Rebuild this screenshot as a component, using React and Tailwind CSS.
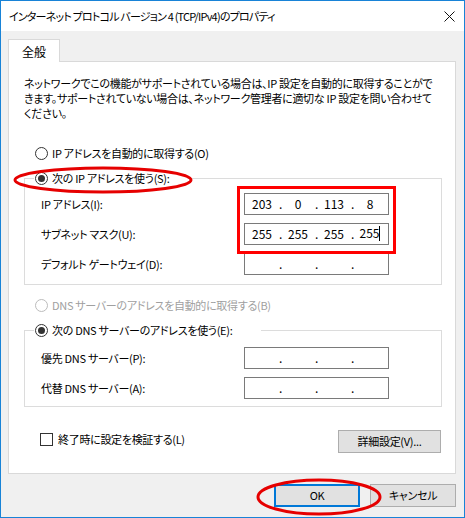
export default function App() {
  const font = "font-['Noto_Sans_CJK_JP',sans-serif] [font-feature-settings:'palt']";

  const Radio = ({ checked, disabled }) => (
    <span
      className={`w-[13px] h-[13px] rounded-full border bg-white flex items-center justify-center shrink-0 ${
        disabled ? "border-[#bcbcbc]" : "border-[#333]"
      }`}
    >
      {checked && <span className="w-[7px] h-[7px] rounded-full bg-[#333]" />}
    </span>
  );

  const IpField = ({ octets = ["", "", "", ""], cursor }) => (
    <div className="w-[145px] h-[22px] border border-[#7a7a7a] bg-white flex items-center text-[12px] leading-none tracking-normal">
      {octets.map((o, i) => (
        <div key={i} className="flex items-center">
          <span className="w-[34px] text-center">
            {o}
            {cursor && i === 3 && (
              <span className="inline-block w-px h-[15px] bg-black align-middle -mt-[2px]" />
            )}
          </span>
          {i < 3 && <span className="w-[2px] text-center">.</span>}
        </div>
      ))}
    </div>
  );

  const FieldRow = ({ label, children }) => (
    <div className="flex items-center h-[22px]">
      <span className="pl-[16px] w-[219px]">{label}</span>
      {children}
    </div>
  );

  return (
    <div className={`relative w-[465px] h-[518px] border border-[#1883d7] bg-[#f0f0f0] flex flex-col text-[11px] tracking-[-0.3px] text-black ${font}`}>
      {/* title bar */}
      <div className="h-[30px] bg-white flex items-center justify-between pl-[8px] pr-[9px] shrink-0">
        <span className="leading-none text-[11px] tracking-[-0.8px]">インターネット プロトコル バージョン 4 (TCP/IPv4)のプロパティ</span>
        <svg width="11" height="11" viewBox="0 0 11 11" className="mt-px">
          <path d="M0.5 0.5 L10.5 10.5 M10.5 0.5 L0.5 10.5" stroke="#111" strokeWidth="1" />
        </svg>
      </div>

      {/* body */}
      <div className="flex-1 pl-[7px] pr-[8px] pt-[8px] flex flex-col">
        <div className="relative z-10 w-[52px] h-[23px] -mb-px bg-white border border-b-0 border-[#d9d9d9] flex items-center justify-center">
          <span className="leading-none pt-[1px] text-[12px] tracking-normal">全般</span>
        </div>
        <div className="w-[448px] h-[413px] bg-white border border-[#d9d9d9] pl-[15px] pr-[13px] pt-[14px] flex flex-col">
          <p className="leading-[15px] whitespace-nowrap">
            ネットワークでこの機能がサポートされている場合は、IP 設定を自動的に取得することがで
            <br />
            きます。サポートされていない場合は、ネットワーク管理者に適切な IP 設定を問い合わせて
            <br />
            ください。
          </p>

          <div className="mt-[24px] h-[16px] flex items-center gap-[4px] pl-[11px]">
            <Radio />
            <span>IP アドレスを自動的に取得する(O)</span>
          </div>

          {/* group 1 */}
          <div className="mt-[9px] h-[16px] flex">
            <span className="w-[10px] h-[8px] self-end border-l border-t border-[#dcdcdc]" />
            <span className="w-[156px] flex items-center gap-[4px] pl-[1px]">
              <Radio checked />
              <span className="whitespace-nowrap">次の IP アドレスを使う(S):</span>
            </span>
            <span className="flex-1 h-[8px] self-end border-t border-r border-[#dcdcdc]" />
          </div>
          <div className="border-l border-r border-b border-[#dcdcdc] pt-[7px] pb-[9px] flex flex-col gap-[8px]">
            <FieldRow label="IP アドレス(I):">
              <IpField octets={["203", "0", "113", "8"]} />
            </FieldRow>
            <FieldRow label="サブネット マスク(U):">
              <IpField octets={["255", "255", "255", "255"]} cursor />
            </FieldRow>
            <FieldRow label="デフォルト ゲートウェイ(D):">
              <IpField />
            </FieldRow>
          </div>

          <div className="mt-[12px] h-[16px] flex items-center gap-[4px] pl-[11px] text-[#a0a0a0]">
            <Radio disabled />
            <span>DNS サーバーのアドレスを自動的に取得する(B)</span>
          </div>

          {/* group 2 */}
          <div className="mt-[9px] h-[16px] flex">
            <span className="w-[10px] h-[8px] self-end border-l border-t border-[#dcdcdc]" />
            <span className="w-[227px] flex items-center gap-[4px] pl-[1px]">
              <Radio checked />
              <span className="whitespace-nowrap">次の DNS サーバーのアドレスを使う(E):</span>
            </span>
            <span className="flex-1 h-[8px] self-end border-t border-r border-[#dcdcdc]" />
          </div>
          <div className="border-l border-r border-b border-[#dcdcdc] pt-[9px] pb-[7px] flex flex-col gap-[8px]">
            <FieldRow label="優先 DNS サーバー(P):">
              <IpField />
            </FieldRow>
            <FieldRow label="代替 DNS サーバー(A):">
              <IpField />
            </FieldRow>
          </div>

          <div className="mt-[23px] flex items-start justify-between pl-[16px] pr-[1px]">
            <div className="flex items-center gap-[5px] mt-[1px]">
              <span className="w-[13px] h-[13px] border border-[#333] bg-white" />
              <span>終了時に設定を検証する(L)</span>
            </div>
            <button className="w-[103px] h-[23px] bg-[#e1e1e1] border border-[#adadad] leading-none">
              詳細設定(V)...
            </button>
          </div>
        </div>

        <div className="flex justify-end gap-[10px] pt-[10px]">
          <button className="w-[86px] h-[23px] bg-[#e1e1e1] border-2 border-[#0078d7] leading-none">OK</button>
          <button className="w-[86px] h-[23px] bg-[#e1e1e1] border border-[#adadad] leading-none">キャンセル</button>
        </div>
      </div>

      {/* red annotations */}
      <svg className="absolute left-[10px] top-[163px]" width="184" height="32">
        <ellipse cx="92" cy="16" rx="88" ry="12" fill="none" stroke="#e60000" strokeWidth="3" />
      </svg>
      <div className="absolute left-[236px] top-[185px] w-[159px] h-[68px] border-[3px] border-[#ff0000]" />
      <svg className="absolute left-[254px] top-[475px]" width="129" height="42">
        <ellipse cx="64" cy="21" rx="61" ry="17" fill="none" stroke="#e60000" strokeWidth="3" />
      </svg>
    </div>
  );
}
